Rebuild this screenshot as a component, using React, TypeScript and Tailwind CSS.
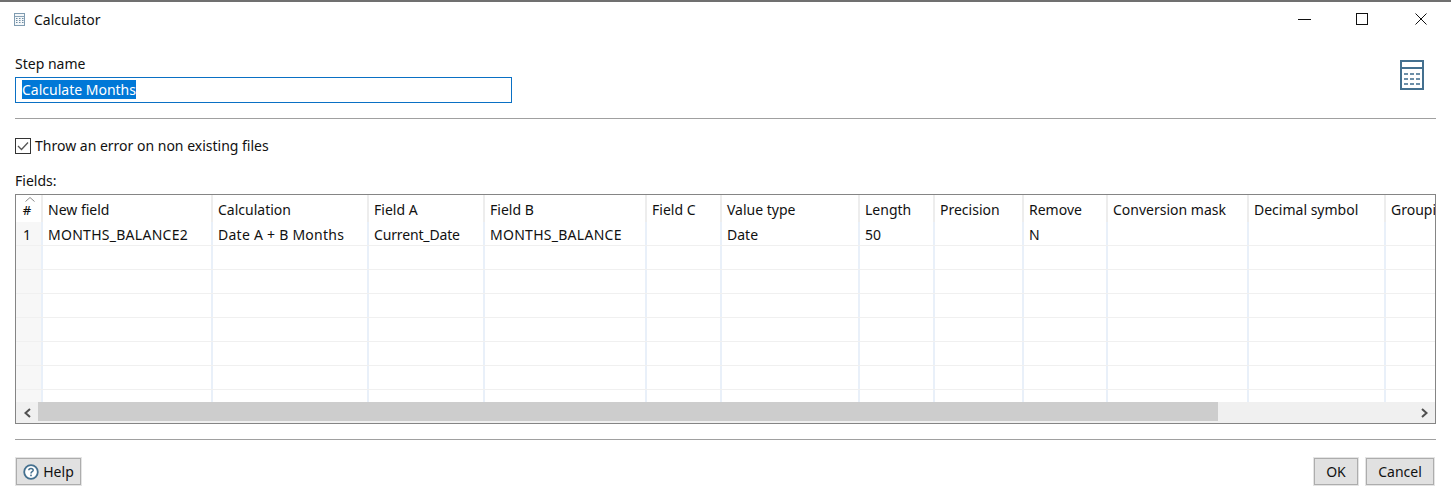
const FONT = "font-['Noto_Sans','Open_Sans',sans-serif]";
const cols: [string, string, string, string][] = [
  ["New field", "MONTHS_BALANCE2", "w-[170px]", "tracking-[0.27px]"],
  ["Calculation", "Date A + B Months", "w-[156px]", "tracking-[0.25px]"],
  ["Field A", "Current_Date", "w-[116px]", "tracking-[-0.15px]"],
  ["Field B", "MONTHS_BALANCE", "w-[162px]", "tracking-[0.27px]"],
  ["Field C", "", "w-[75px]", ""],
  ["Value type", "Date", "w-[138px]", ""],
  ["Length", "50", "w-[75px]", ""],
  ["Precision", "", "w-[89px]", ""],
  ["Remove", "N", "w-[84px]", ""],
  ["Conversion mask", "", "w-[141px]", ""],
  ["Decimal symbol", "", "w-[137px]", ""],
  ["Grouping", "", "w-[60px]", ""],
];

function CalcIcon({ big }: { big?: boolean }) {
  if (big) {
    return (
      <svg width="24" height="30" viewBox="0 0 24 30" className="block">
        <rect x="1" y="1" width="22" height="28" fill="#fff" stroke="#44708f" strokeWidth="2" />
        <rect x="2" y="7" width="20" height="2" fill="#44708f" />
        {[13, 18, 23].map((y) =>
          [4, 10, 16].map((x) => <rect key={`${x}-${y}`} x={x} y={y} width="4" height="2" fill="#6c8fa8" />),
        )}
      </svg>
    );
  }
  return (
    <svg width="11" height="13" viewBox="0 0 11 13" className="block">
      <rect x="0.5" y="0.5" width="10" height="12" fill="#f4f7f9" stroke="#7f9bb0" />
      <rect x="1" y="3" width="9" height="1" fill="#8aa3b6" />
      {[5, 7, 9].map((y) =>
        [2, 5, 8].map((x) => <rect key={`${x}-${y}`} x={x} y={y} width="1.5" height="1" fill="#6d8ba2" />),
      )}
    </svg>
  );
}

function Row({ values, header, n }: { values: string[]; header?: boolean; n?: string }) {
  const divider = header ? "border-[#ededed]" : "border-[#e9f0f9]";
  return (
    <div className={`flex shrink-0 ${header ? "h-[27px]" : "h-[24px] border-b border-[#f0f0f0]"} `}>
      <div className={`w-[27px] shrink-0 border-r-2 ${divider} pr-[3px] text-center ${header ? "bg-white" : "bg-[#f7f7f7]"} leading-[25px]`}>
        {header ? (
          <div className="relative h-full">
            <svg width="10" height="5" viewBox="0 0 10 5" className="absolute left-[9px] top-[2px]">
              <path d="M0.5 4.5 L5 0.5 L9.5 4.5" fill="none" stroke="#8a8a8a" />
            </svg>
            <span className="absolute left-0 right-0 top-[5px] text-[13px] font-medium leading-[20px]">#</span>
          </div>
        ) : (
          <span className="text-[14px]">{n}</span>
        )}
      </div>
      {cols.map((c, i) => (
        <div
          key={c[0]}
          className={`${c[2]} ${header ? "" : c[3]} shrink-0 overflow-hidden whitespace-nowrap pl-[5px] ${
            i < cols.length - 1 ? `border-r-2 ${divider}` : ""
          } ${header ? "leading-[29px]" : "leading-[25px]"}`}
        >
          {values[i]}
        </div>
      ))}
    </div>
  );
}

function Btn({ children, className }: { children: React.ReactNode; className: string }) {
  return (
    <div className={`flex h-[27px] items-center justify-center border border-[#adadad] bg-[#e1e1e1] outline outline-1 outline-[#e4e4e4] ${className}`}>
      {children}
    </div>
  );
}

export default function App() {
  return (
    <div className={`${FONT} flex h-[500px] w-[1451px] flex-col overflow-hidden border-t-2 border-[#707070] bg-white text-[14px] text-[#111]`}>
      <div className="flex h-[34px] shrink-0 items-center justify-between">
        <div className="flex items-center pl-[14px]">
          <CalcIcon />
          <span className="ml-[9px]">Calculator</span>
        </div>
        <div className="flex items-center pr-[24px]">
          <svg width="13" height="1" viewBox="0 0 13 1" className="block"><rect width="13" height="1" fill="#111" /></svg>
          <svg width="12" height="12" viewBox="0 0 12 12" className="ml-[45px] block"><rect x="0.5" y="0.5" width="11" height="11" fill="none" stroke="#111" /></svg>
          <svg width="12" height="12" viewBox="0 0 12 12" className="ml-[47px] block"><path d="M0.5 0.5 L11.5 11.5 M11.5 0.5 L0.5 11.5" stroke="#111" /></svg>
        </div>
      </div>

      <div className="flex shrink-0 items-start justify-between pl-[15px] pr-[27px] pt-[17px]">
        <div>
          <div className="leading-[22px]">Step name</div>
          <div className="mt-[2px] h-[26px] w-[497px] border border-[#0a70c4] pl-[6px] pt-[2px] leading-[19px]">
            <span className="inline-block bg-[#0078d7] text-white">Calculate Months</span>
          </div>
        </div>
        <div className="pt-[7px]"><CalcIcon big /></div>
      </div>

      <div className="mx-[15px] mt-[15px] h-px shrink-0 bg-[#a0a0a0]" />

      <div className="ml-[15px] mt-[16px] flex shrink-0 items-center">
        <div className="flex h-[16px] w-[16px] items-center justify-center border border-[#333]">
          <svg width="12" height="10" viewBox="0 0 12 10"><path d="M1 5 L4.5 8.5 L11 1.5" fill="none" stroke="#555" strokeWidth="1.3" /></svg>
        </div>
        <span className="ml-[4px]">Throw an error on non existing files</span>
      </div>

      <div className="ml-[15px] mt-[16px] shrink-0 leading-[18px]">Fields:</div>

      <div className="ml-[15px] mt-[4px] flex h-[230px] w-[1421px] shrink-0 flex-col overflow-hidden border border-[#858585]">
        <div className="flex h-[207px] shrink-0 flex-col overflow-hidden">
          <Row header values={cols.map((c) => c[0])} />
          <Row n="1" values={cols.map((c) => c[1])} />
          {[0, 1, 2, 3, 4, 5, 6].map((i) => (
            <Row key={i} values={cols.map(() => "")} />
          ))}
        </div>
        <div className="flex h-[21px] shrink-0 items-center bg-[#f0f0f0]">
          <div className="flex w-[22px] shrink-0 justify-center">
            <svg width="9" height="10" viewBox="0 0 9 10"><path d="M7 1 L2.5 5 L7 9" fill="none" stroke="#505050" strokeWidth="2" /></svg>
          </div>
          <div className="h-[19px] w-[1180px] self-start bg-[#cdcdcd]" />
          <div className="flex-1" />
          <div className="flex w-[21px] shrink-0 justify-center">
            <svg width="9" height="10" viewBox="0 0 9 10"><path d="M2 1 L6.5 5 L2 9" fill="none" stroke="#505050" strokeWidth="2" /></svg>
          </div>
        </div>
      </div>

      <div className="mx-[15px] mt-[15px] h-px shrink-0 bg-[#a0a0a0]" />

      <div className="ml-[16px] mr-[17px] mt-[18px] flex shrink-0 items-center justify-between">
        <Btn className="w-[65px] gap-[4px]">
          <svg width="16" height="16" viewBox="0 0 16 16">
            <circle cx="8" cy="8" r="6.8" fill="#fff" stroke="#44708f" strokeWidth="1.8" />
            <path d="M5.8 6.2 C5.8 3.8 10.2 3.8 10.2 6.2 C10.2 7.8 8 7.6 8 9.4" fill="none" stroke="#44708f" strokeWidth="1.5" />
            <rect x="7.2" y="10.6" width="1.6" height="1.6" fill="#44708f" />
          </svg>
          <span>Help</span>
        </Btn>
        <div className="flex gap-[8px]">
          <Btn className="w-[44px]">OK</Btn>
          <Btn className="w-[68px]">Cancel</Btn>
        </div>
      </div>
    </div>
  );
}
